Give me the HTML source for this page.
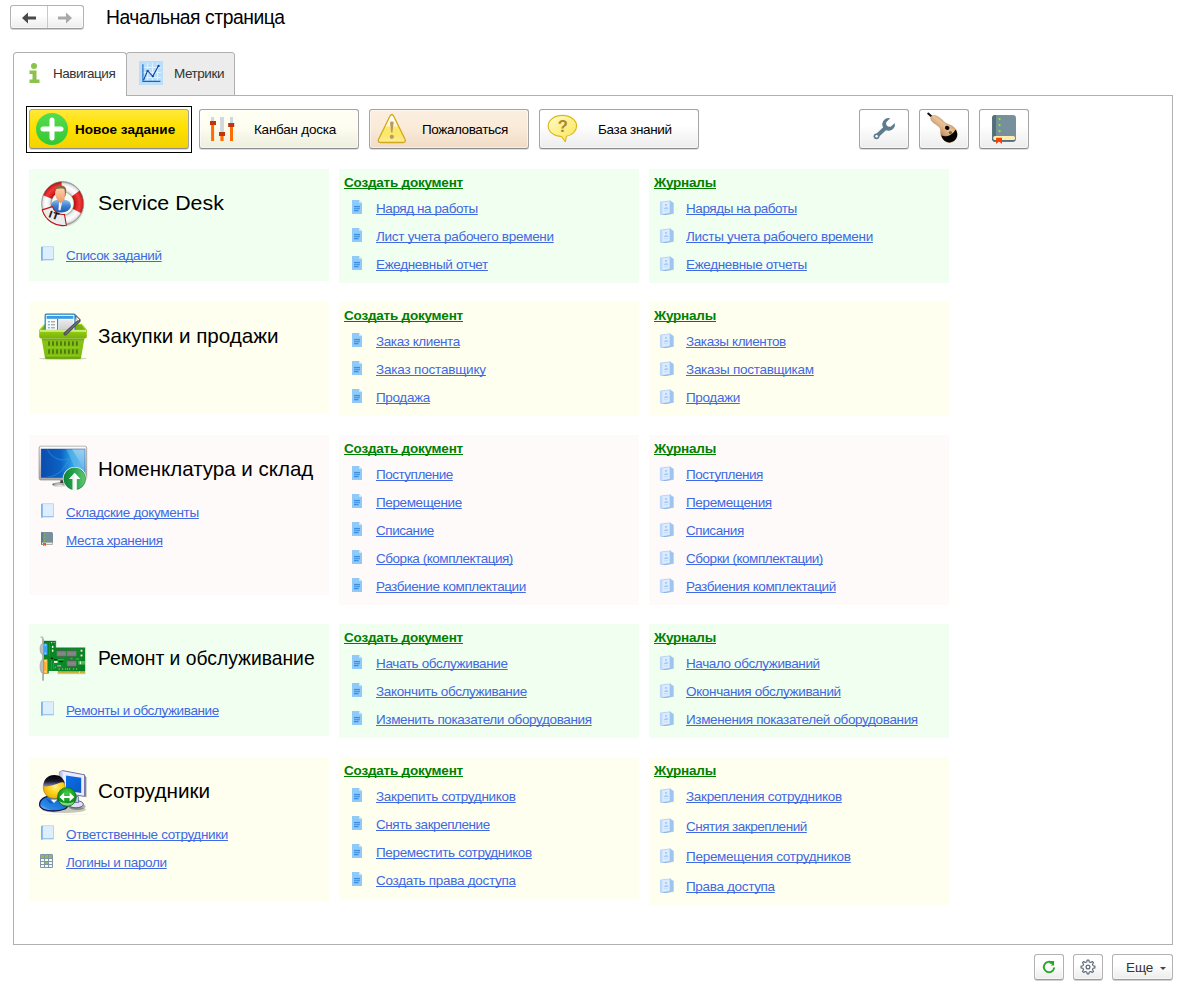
<!DOCTYPE html>
<html lang="ru"><head><meta charset="utf-8"><title>Начальная страница</title>
<style>
*{box-sizing:border-box;margin:0;padding:0}
html,body{width:1197px;height:994px;overflow:hidden;background:#fff}
body{font-family:"Liberation Sans",sans-serif;font-size:13px;color:#000;position:relative}
.abs{position:absolute}
.t{position:absolute;white-space:nowrap;line-height:16px;height:16px}
.btn{position:absolute;border:1px solid #a3a3a8;border-bottom-color:#8c8c90;border-radius:3px;background:linear-gradient(#ffffff 0%,#ffffff 40%,#ececec 100%);box-shadow:0 1px 0 rgba(0,0,0,0.13),inset 0 0 0 1px rgba(255,255,255,0.55)}
.bb{border-color:#b2b2b2;border-bottom-color:#9c9c9c;box-shadow:0 1px 0 rgba(0,0,0,0.18),inset 0 0 0 1px rgba(255,255,255,0.55)}
.pn{position:absolute}
.g{background:#f0fff0}.y{background:#fffff0}.p{background:#fffafa}
a.l{position:absolute;white-space:nowrap;line-height:16px;height:16px;color:#4169e1;text-decoration:underline;text-underline-offset:0.5px;text-decoration-thickness:1px;text-decoration-skip-ink:none;font-size:13.5px}
a.h{position:absolute;white-space:nowrap;line-height:16px;height:16px;color:#008000;font-weight:bold;text-decoration:underline;text-underline-offset:0.5px;text-decoration-thickness:1px;text-decoration-skip-ink:none;font-size:13.5px}
.ttl{position:absolute;white-space:nowrap;font-size:21px;line-height:26px;height:26px;color:#000}
svg{position:absolute;display:block;overflow:visible}
</style></head>
<body>
<div class="btn bb" style="left:10px;top:5px;width:74px;height:24px"></div>
<div class="abs" style="left:47px;top:6px;width:1px;height:22px;background:#c9c9c9"></div>
<svg style="left:22px;top:11.5px" width="14" height="12" viewBox="0 0 14 12"><path d="M0 6 L6 0.5 V4.5 H14 V7.5 H6 V11.5 Z" fill="#4a4a4a"/></svg>
<svg style="left:58px;top:11.5px" width="14" height="12" viewBox="0 0 14 12"><path d="M14 6 L8 0.5 V4.5 H0 V7.5 H8 V11.5 Z" fill="#a9a9a9"/></svg>
<div class="t" style="left:106px;top:5px;font-size:19.3px;line-height:26px;height:26px;letter-spacing:-0.442px">Начальная страница</div>
<div class="abs" style="left:13px;top:95px;width:1160px;height:850px;border:1px solid #b0b0b0;background:#fff"></div>
<div class="abs" style="left:126px;top:52px;width:109px;height:44px;border:1px solid #b0b0b0;border-radius:3px 3px 0 0;background:#ececec"></div>
<div class="abs" style="left:13px;top:52px;width:114px;height:44px;border:1px solid #b0b0b0;border-bottom:none;border-radius:4px 4px 0 0;background:#fff"></div>
<svg style="left:28.6px;top:63px" width="11" height="20" viewBox="0 0 11 20"><circle cx="5" cy="3" r="3" fill="#8bc34a"/><path d="M0.5 7.5 H7.5 V16.5 H10.5 V20 H0.5 V16.5 H3.5 V11 H0.5 Z" fill="#8bc34a"/></svg>
<div class="t" style="left:53px;top:65.7px;color:#333;font-size:13.5px;letter-spacing:-0.500px">Навигация</div>
<svg style="left:139px;top:61px" width="24" height="24" viewBox="0 0 24 24"><rect width="24" height="24" fill="#bbdefb"/><path d="M8.5 2V21M13.5 2V21M18.5 2V21M3 6.5H22M3 11.5H22M3 16.5H22" stroke="#e3f2fd" stroke-width="1"/><path d="M3.9 3.2V20.4H21.4" stroke="#1565c0" stroke-width="1.1" fill="none"/><path d="M4.6 19L8.6 9.7L13.8 15.3L19.5 4.7" stroke="#0d47a1" stroke-width="1.1" fill="none"/><circle cx="19.5" cy="4.9" r="1.2" fill="#0d47a1"/><circle cx="13.8" cy="15.3" r="1.1" fill="#0d47a1"/><circle cx="8.6" cy="9.8" r="1.1" fill="#0d47a1"/></svg>
<div class="t" style="left:174px;top:65.7px;color:#333;font-size:13.5px;letter-spacing:-0.449px">Метрики</div>
<div class="abs" style="left:26px;top:106px;width:166px;height:47px;border:1px solid #000"></div>
<div class="btn" style="left:29px;top:109px;width:160px;height:40px;background:linear-gradient(#ffe83a 0%,#ffe100 45%,#f2d300 100%);border-color:#a4a4a0 #a2a2a0 #8c8c88 #a2a2a0;box-shadow:0 1px 0 rgba(0,0,0,0.13)"></div>
<svg style="left:36px;top:113px" width="32" height="32" viewBox="0 0 32 32"><defs><linearGradient id="pg" x1="0" y1="0" x2="0" y2="1"><stop offset="0" stop-color="#55dc50"/><stop offset="1" stop-color="#33c733"/></linearGradient></defs><circle cx="16" cy="16" r="16" fill="url(#pg)"/><path d="M16 7V25M7 16H25" stroke="#fff" stroke-width="5" stroke-linecap="round"/></svg>
<div class="t" style="left:75px;top:121.6px;font-weight:bold;font-size:13.5px;letter-spacing:0.038px">Новое задание</div>
<div class="btn" style="left:199px;top:109px;width:160px;height:40px;background:linear-gradient(#fffff4 0%,#fdfdf0 45%,#eeeedf 100%)"></div>
<svg style="left:210px;top:117px" width="24" height="24" viewBox="0 0 24 24"><rect x="1.1" y="0" width="3" height="5" fill="#cfd8dc"/><rect x="1.1" y="6" width="3" height="18" fill="#ff6d00"/><rect x="0" y="4" width="6" height="4" fill="#bf360c"/><rect x="10.1" y="0" width="3.8" height="15.5" fill="#cfd8dc"/><rect x="10.4" y="17" width="3.2" height="7" fill="#ff6d00"/><rect x="9" y="15" width="6" height="4" fill="#bf360c"/><rect x="20" y="0" width="3" height="7" fill="#cfd8dc"/><rect x="20" y="8" width="3" height="16" fill="#ff6d00"/><rect x="18.2" y="6" width="6" height="4" fill="#bf360c"/></svg>
<div class="t" style="left:254px;top:121.6px;font-size:13.5px;letter-spacing:-0.243px">Канбан доска</div>
<div class="btn" style="left:369px;top:109px;width:160px;height:40px;background:linear-gradient(#fbeee0 0%,#faebd9 45%,#efdcc6 100%)"></div>
<svg style="left:376px;top:112px" width="32" height="32" viewBox="0 0 32 32"><defs><linearGradient id="wg" x1="0" y1="0" x2="0" y2="1"><stop offset="0" stop-color="#ffffff"/><stop offset="0.42" stop-color="#fdf6c8"/><stop offset="0.44" stop-color="#fbe96a"/><stop offset="0.75" stop-color="#fbe86c"/><stop offset="1" stop-color="#fbeea0"/></linearGradient></defs><path d="M14.1 3.8 Q15.8 1.2 17.5 3.8 L29 27.2 Q30.2 30.4 27 30.5 L4.6 30.5 Q1.4 30.4 2.6 27.2 Z" fill="url(#wg)" stroke="#d2a71c" stroke-width="1.3" stroke-linejoin="round"/><path d="M14 10.6 Q14 9.4 15.8 9.4 Q17.6 9.4 17.6 10.6 L16.5 20.6 L15.1 20.6 Z" fill="#b8986a"/><circle cx="15.8" cy="24.8" r="2.1" fill="#b8986a"/></svg>
<div class="t" style="left:422px;top:121.6px;font-size:13.5px;letter-spacing:-0.405px">Пожаловаться</div>
<div class="btn" style="left:539px;top:109px;width:160px;height:40px"></div>
<svg style="left:547px;top:112px" width="32" height="32" viewBox="0 0 32 32"><defs><linearGradient id="qg" x1="0" y1="0" x2="1" y2="1"><stop offset="0" stop-color="#fffbd0"/><stop offset="0.5" stop-color="#fdf08a"/><stop offset="1" stop-color="#fae65a"/></linearGradient></defs><path d="M15.4 3.4 C23.4 3.4 29.6 8 29.6 14 C29.6 19 25.2 23.2 19.4 24.3 L18.3 29.6 L14.6 24.6 C7.2 24.4 1.2 19.8 1.2 14 C1.2 8 7.4 3.4 15.4 3.4 Z" fill="url(#qg)" stroke="#dcb818" stroke-width="1.1" stroke-linejoin="round"/><text x="15.8" y="19.6" font-family="Liberation Sans, sans-serif" font-weight="bold" font-size="16.5" text-anchor="middle" fill="#a8882e">?</text></svg>
<div class="t" style="left:598px;top:121.6px;font-size:13.5px;letter-spacing:-0.324px">База знаний</div>
<div class="btn" style="left:859px;top:109px;width:50px;height:40px"></div>
<svg style="left:855px;top:104px" width="60" height="50" viewBox="0 0 60 50"><path d="M21.6 32.2 L30.4 24" stroke="#5d7d8e" stroke-width="4" stroke-linecap="round" fill="none"/><path d="M35.2 14.2 A6.4 6.4 0 1 0 39.8 18.9 L36 22.4 Q33.8 23.4 31.9 21.7 Q30.2 19.9 31.5 18 Z" fill="#5d7d8e"/><circle cx="21.5" cy="32.3" r="2.9" fill="#5d7d8e"/><circle cx="21.6" cy="32.2" r="1.25" fill="#fff"/></svg>
<div class="btn" style="left:919px;top:109px;width:50px;height:40px"></div>
<svg style="left:915px;top:104px" width="60" height="50" viewBox="0 0 60 50"><defs><linearGradient id="scg" gradientUnits="userSpaceOnUse" x1="22" y1="32" x2="36" y2="16"><stop offset="0" stop-color="#9a5a22"/><stop offset="0.3" stop-color="#d19e6c"/><stop offset="0.6" stop-color="#e6c39a"/><stop offset="1" stop-color="#c9925c"/></linearGradient></defs><path d="M13.2 9.6 L16.6 12.6" stroke="#0a0a0a" stroke-width="2" stroke-linecap="round"/><path d="M16.4 11.9 Q18.5 10.6 20.6 11.6 C24 12.8 27 15.5 29.5 18.2 C32 20.3 35.5 20.6 38 22.5 C41.5 25 42.8 29 42 32.5 C41 36.5 37.5 38.6 34.2 38.4 C30.5 38.2 27.5 35.5 26.2 32 C25 29 26.2 26 25 24 C23.6 21.6 18.5 19.5 16.6 17 C15.2 15 15.6 13 16.4 11.9 Z" fill="url(#scg)" stroke="#9a642c" stroke-opacity="0.55" stroke-width="0.5"/><path d="M26.3 31.2 C29.5 33.4 36.5 32.6 40.6 25.4 C42.6 28.5 42.8 31.6 41.4 34 C39.8 37 37 38.5 34.2 38.4 C30.5 38.2 27.6 35.6 26.3 31.2 Z" fill="#020202"/><ellipse cx="32.2" cy="23.9" rx="2.3" ry="2" transform="rotate(25 32.2 23.9)" fill="#050505"/><circle cx="35.4" cy="28.6" r="1.2" fill="#8a6a40" stroke="#3a2a14" stroke-width="0.5"/></svg>
<div class="btn" style="left:979px;top:109px;width:50px;height:40px"></div>
<svg style="left:975px;top:104px" width="60" height="50" viewBox="0 0 60 50"><rect x="17.1" y="11.1" width="23.9" height="26.6" rx="3.2" fill="#78909c"/><path d="M20.3 11.1 H21 V37.7 H20.3 Q17.1 37.7 17.1 34.5 V14.3 Q17.1 11.1 20.3 11.1 Z" fill="#546e7a"/><path d="M17.1 33 Q17.1 37.7 20.3 37.7 H37.8 Q41 37.7 41 33 V34.5 Q40.6 36.1 38.6 36.1 H20 Q18 36.1 17.6 34 Z" fill="#546e7a"/><rect x="18.3" y="31.9" width="21.7" height="4.2" rx="1.7" fill="#ffecb3"/><circle cx="24.6" cy="15.1" r="1.1" fill="#76ff03"/><circle cx="24.6" cy="21.1" r="1.1" fill="#76ff03"/><circle cx="24.6" cy="27.2" r="1.1" fill="#76ff03"/><path d="M21.1 33.8 H27 V39.9 L24.05 37.6 L21.1 39.9 Z" fill="#ff3d00"/></svg>
<div class="pn g" style="left:29px;top:169px;width:300px;height:112px"></div>
<div class="pn g" style="left:339px;top:169px;width:300px;height:114px"></div>
<div class="pn g" style="left:649px;top:169px;width:300px;height:114px"></div>
<svg style="left:33px;top:174px" width="60" height="58" viewBox="0 0 60 58"><defs><radialGradient id="lbw" gradientUnits="userSpaceOnUse" cx="29.6" cy="29.4" r="21.42"><stop offset="0.52" stop-color="#a8a8a8"/><stop offset="0.62" stop-color="#ececec"/><stop offset="0.78" stop-color="#ffffff"/><stop offset="0.92" stop-color="#e6e6e6"/><stop offset="1" stop-color="#9a9a9a"/></radialGradient><radialGradient id="lbr" gradientUnits="userSpaceOnUse" cx="29.6" cy="29.4" r="21.42"><stop offset="0.52" stop-color="#9a1010"/><stop offset="0.64" stop-color="#d82020"/><stop offset="0.8" stop-color="#f03a3a"/><stop offset="0.93" stop-color="#d82020"/><stop offset="1" stop-color="#8e1010"/></radialGradient><linearGradient id="lbs" x1="0" y1="0" x2="0" y2="1"><stop offset="0" stop-color="#ffd9b0"/><stop offset="1" stop-color="#f0a070"/></linearGradient><linearGradient id="lbb" x1="0" y1="0" x2="0" y2="1"><stop offset="0" stop-color="#8fb8ea"/><stop offset="0.5" stop-color="#3a7fd0"/><stop offset="1" stop-color="#1f5cb0"/></linearGradient></defs><ellipse cx="30.2" cy="31" rx="21.3" ry="21.8" fill="#000" opacity="0.10"/><ellipse cx="29.6" cy="29.4" rx="21" ry="21.84" fill="url(#lbw)"/><g fill="url(#lbr)"><path d="M10.13 21.22 A21.00 21.84 0 0 1 28.50 7.59 L29.01 17.77 A11.20 11.65 0 0 0 19.22 25.04 Z"/><path d="M46.59 16.56 A21.00 21.84 0 0 1 48.31 39.32 L39.58 34.69 A11.20 11.65 0 0 0 38.66 22.55 Z"/></g><ellipse cx="29.6" cy="29.4" rx="11.2" ry="11.648" fill="#f0fff0"/><ellipse cx="29.6" cy="29.4" rx="11.2" ry="11.648" fill="none" stroke="#7d7d7d" stroke-opacity="0.5" stroke-width="0.8"/><ellipse cx="29.6" cy="29.4" rx="21" ry="21.84" fill="none" stroke="#8a8a8a" stroke-opacity="0.75" stroke-width="0.9"/><path d="M17.8 33.5 C17.5 28.5 21 26 24.5 26 L31.5 26 C35.5 26 38.3 28.5 37.8 33 C36 37.5 31 38.6 27.6 38.6 C24 38.6 19.5 37.5 17.8 33.5 Z" fill="url(#lbb)"/><path d="M26.2 27 L29.3 27 L27.4 36.5 L25.4 36 Z" fill="#f4f4f4"/><path d="M24.5 26.2 L27.6 29.5 L31.8 25.6 L31 24 L25 24 Z" fill="#e79a6a"/><ellipse cx="27.4" cy="19.6" rx="5.3" ry="7.6" fill="url(#lbs)"/><path d="M22 17.5 C21.6 13.5 24 11.5 27.6 11.6 C31 11.6 33.4 13.2 33.2 17 C33.1 19.5 32.6 21.8 31.6 23.2 C32.2 20 32 17 31.2 15 C28.5 14.2 25 14.4 22.8 15.2 Z" fill="#8a6a42"/><path d="M33.30 51.22 A21.30 22.15 0 0 1 9.23 35.88 L19.46 32.62 A10.60 11.02 0 0 0 31.44 40.26 Z" fill="#ececec" stroke="#b81414" stroke-width="1.1" stroke-linejoin="round"/><text x="21.4" y="44.8" opacity="0.98" transform="rotate(20 21.4 41.6)" font-family="Liberation Sans, sans-serif" font-weight="bold" font-size="9.5" text-anchor="middle" fill="#0a0a0a" stroke="#0a0a0a" stroke-width="0.3" letter-spacing="1.2">IT</text></svg>
<div class="ttl" style="left:98px;top:190px;transform:scaleX(1.017);transform-origin:0 0">Service Desk</div>
<svg style="left:41px;top:246px" width="13" height="15.2" viewBox="0 0 13 15.2"><rect x="1" y="0.3" width="11.6" height="14.6" rx="0.8" fill="#dbe7f4"/><rect x="1" y="0.3" width="11.9" height="1.2" fill="#c0daf4"/><rect x="1.8" y="1.3" width="10.3" height="11.8" fill="#ddeeff"/><rect x="12" y="1" width="0.9" height="13" fill="#b4d2f0"/><rect x="1.8" y="13" width="11.1" height="1" fill="#9ec5ee"/><rect x="0" y="0.8" width="1.8" height="13.9" fill="#7db4ea"/></svg>
<a class="l" style="left:66px;top:248px;letter-spacing:-0.328px">Список заданий</a>
<a class="h" style="left:344px;top:175px;letter-spacing:-0.215px">Создать документ</a>
<svg style="left:352px;top:200px" width="10" height="14" viewBox="0 0 10 14"><path d="M0 0 H7.2 L10 2.8 V14 H0 Z" fill="#90caf9"/><path d="M7.2 0 L10 2.8 H7.2 Z" fill="#e3f2fd"/><rect x="2" y="5.9" width="6" height="1.4" fill="#3f8fe0"/><rect x="2" y="7.9" width="6" height="1.4" fill="#4f9ae6"/><rect x="2" y="9.9" width="4.6" height="1.4" fill="#3f8fe0"/></svg>
<a class="l" style="left:376px;top:201px;letter-spacing:-0.422px">Наряд на работы</a>
<svg style="left:352px;top:228px" width="10" height="14" viewBox="0 0 10 14"><path d="M0 0 H7.2 L10 2.8 V14 H0 Z" fill="#90caf9"/><path d="M7.2 0 L10 2.8 H7.2 Z" fill="#e3f2fd"/><rect x="2" y="5.9" width="6" height="1.4" fill="#3f8fe0"/><rect x="2" y="7.9" width="6" height="1.4" fill="#4f9ae6"/><rect x="2" y="9.9" width="4.6" height="1.4" fill="#3f8fe0"/></svg>
<a class="l" style="left:376px;top:229px;letter-spacing:-0.289px">Лист учета рабочего времени</a>
<svg style="left:352px;top:256px" width="10" height="14" viewBox="0 0 10 14"><path d="M0 0 H7.2 L10 2.8 V14 H0 Z" fill="#90caf9"/><path d="M7.2 0 L10 2.8 H7.2 Z" fill="#e3f2fd"/><rect x="2" y="5.9" width="6" height="1.4" fill="#3f8fe0"/><rect x="2" y="7.9" width="6" height="1.4" fill="#4f9ae6"/><rect x="2" y="9.9" width="4.6" height="1.4" fill="#3f8fe0"/></svg>
<a class="l" style="left:376px;top:257px;letter-spacing:-0.343px">Ежедневный отчет</a>
<a class="h" style="left:654px;top:175px;letter-spacing:-0.221px">Журналы</a>
<svg style="left:660px;top:200px" width="14" height="15" viewBox="0 0 14 15"><path d="M0.4 2 L10 0.9 V13.3 L1.2 14.6 Q0.4 14.6 0.4 13.8 Z" fill="#dbeafe" stroke="#a5c9f0" stroke-width="0.7"/><path d="M10 -0.3 L10.6 1 L13.7 3 V13.8 L10 13.3 Z" fill="#9ec5ee"/><path d="M1.2 14.7 L10 13.3 L13.7 13.8 L5 15.1 Z" fill="#7fb0e4"/><rect x="0.4" y="2.2" width="1.9" height="11.8" fill="#bdd9fa"/><circle cx="6" cy="4.9" r="0.9" fill="#8fc1f5"/><path d="M3.8 8.9 Q6 5.8 8.6 8.4 Z" fill="#8fc1f5"/><rect x="4" y="10.4" width="4" height="0.7" fill="#bcd7f5"/></svg>
<a class="l" style="left:686px;top:201px;letter-spacing:-0.433px">Наряды на работы</a>
<svg style="left:660px;top:228px" width="14" height="15" viewBox="0 0 14 15"><path d="M0.4 2 L10 0.9 V13.3 L1.2 14.6 Q0.4 14.6 0.4 13.8 Z" fill="#dbeafe" stroke="#a5c9f0" stroke-width="0.7"/><path d="M10 -0.3 L10.6 1 L13.7 3 V13.8 L10 13.3 Z" fill="#9ec5ee"/><path d="M1.2 14.7 L10 13.3 L13.7 13.8 L5 15.1 Z" fill="#7fb0e4"/><rect x="0.4" y="2.2" width="1.9" height="11.8" fill="#bdd9fa"/><circle cx="6" cy="4.9" r="0.9" fill="#8fc1f5"/><path d="M3.8 8.9 Q6 5.8 8.6 8.4 Z" fill="#8fc1f5"/><rect x="4" y="10.4" width="4" height="0.7" fill="#bcd7f5"/></svg>
<a class="l" style="left:686px;top:229px;letter-spacing:-0.300px">Листы учета рабочего времени</a>
<svg style="left:660px;top:256px" width="14" height="15" viewBox="0 0 14 15"><path d="M0.4 2 L10 0.9 V13.3 L1.2 14.6 Q0.4 14.6 0.4 13.8 Z" fill="#dbeafe" stroke="#a5c9f0" stroke-width="0.7"/><path d="M10 -0.3 L10.6 1 L13.7 3 V13.8 L10 13.3 Z" fill="#9ec5ee"/><path d="M1.2 14.7 L10 13.3 L13.7 13.8 L5 15.1 Z" fill="#7fb0e4"/><rect x="0.4" y="2.2" width="1.9" height="11.8" fill="#bdd9fa"/><circle cx="6" cy="4.9" r="0.9" fill="#8fc1f5"/><path d="M3.8 8.9 Q6 5.8 8.6 8.4 Z" fill="#8fc1f5"/><rect x="4" y="10.4" width="4" height="0.7" fill="#bcd7f5"/></svg>
<a class="l" style="left:686px;top:257px;letter-spacing:-0.362px">Ежедневные отчеты</a>
<div class="pn y" style="left:29px;top:302px;width:300px;height:112px"></div>
<div class="pn y" style="left:339px;top:302px;width:300px;height:114px"></div>
<div class="pn y" style="left:649px;top:302px;width:300px;height:114px"></div>
<svg style="left:33px;top:307px" width="60" height="58" viewBox="0 0 60 58"><defs><linearGradient id="bk1" x1="0" y1="0" x2="0" y2="1"><stop offset="0" stop-color="#a4dc10"/><stop offset="0.25" stop-color="#8fcb0c"/><stop offset="1" stop-color="#78b20a"/></linearGradient><linearGradient id="bk2" x1="0" y1="0" x2="0" y2="1"><stop offset="0" stop-color="#6ea010"/><stop offset="0.15" stop-color="#86c414"/><stop offset="1" stop-color="#7cba12"/></linearGradient><linearGradient id="bk3" x1="0" y1="0" x2="0" y2="1"><stop offset="0" stop-color="#e9e9e9"/><stop offset="1" stop-color="#cfcfcf"/></linearGradient></defs><ellipse cx="30" cy="51.6" rx="24" ry="1.3" fill="#000" opacity="0.18"/><path d="M6.5 23.5 L12 17.4 L48.6 17.4 L53.6 23.5 Z" fill="#78b010"/><path d="M6.5 23.5 L12 17.4 L48.6 17.4 L53.6 23.5" fill="none" stroke="#9ad614" stroke-width="1.2"/><rect x="12.2" y="7.2" width="29.8" height="16.5" rx="1" fill="#fafafa" stroke="#1a80cc" stroke-width="1.2"/><rect x="13.6" y="8.9" width="26.8" height="2.9" fill="#3a9be0"/><rect x="24.1" y="12" width="1.1" height="11.5" fill="#1a80cc"/><rect x="26.1" y="13.1" width="13.8" height="10.2" fill="url(#bk3)"/><rect x="14.9" y="14.3" width="2" height="1" fill="#3a9be0"/><rect x="18" y="14.3" width="4" height="1" fill="#8a8a8a"/><rect x="14.9" y="17.3" width="2" height="1" fill="#3a9be0"/><rect x="18" y="17.3" width="4" height="1" fill="#8a8a8a"/><rect x="14.9" y="20.3" width="2" height="1" fill="#3a9be0"/><rect x="18" y="20.3" width="4" height="1" fill="#8a8a8a"/><path d="M6.2 23.4 Q6.2 22.8 7 22.8 L53 22.8 Q53.8 22.8 53.8 23.4 L53.8 29.4 Q53.8 31.4 51.8 31.4 L8.2 31.4 Q6.2 31.4 6.2 29.4 Z" fill="url(#bk1)"/><rect x="6.8" y="23.3" width="46.4" height="1.3" fill="#e9f8c0" opacity="0.95"/><path d="M42.3 7.2 L47.6 12.6 L47.6 14.6 L33.4 28.2 Q32 29.2 30.8 28 Q29.8 26.6 31 25.6 L44.4 13.2 L42.3 11.2 Z" fill="#505357"/><path d="M43.3 9.4 L46.4 12.6 L45 13.8 L43.3 12.1 Z" fill="#f4f4f4"/><path d="M45.8 14.2 L32.4 26.8" stroke="#9a9ea3" stroke-width="0.6"/><path d="M8.6 31.4 L51.4 31.4 L48 51 Q47.8 51.8 47 51.8 L13 51.8 Q12.2 51.8 12 51 Z" fill="url(#bk2)"/><path d="M12.3 50.3 L47.7 50.3 L47.5 51.2 Q47.3 51.8 46.6 51.8 L13.4 51.8 Q12.7 51.8 12.5 51.2 Z" fill="#68a00c"/><rect x="15.10" y="34.2" width="1.9" height="4.6" rx="0.6" fill="#4d7a0e"/><rect x="19.07" y="34.2" width="1.9" height="4.6" rx="0.6" fill="#4d7a0e"/><rect x="23.04" y="34.2" width="1.9" height="4.6" rx="0.6" fill="#4d7a0e"/><rect x="27.01" y="34.2" width="1.9" height="4.6" rx="0.6" fill="#4d7a0e"/><rect x="30.98" y="34.2" width="1.9" height="4.6" rx="0.6" fill="#4d7a0e"/><rect x="34.95" y="34.2" width="1.9" height="4.6" rx="0.6" fill="#4d7a0e"/><rect x="38.92" y="34.2" width="1.9" height="4.6" rx="0.6" fill="#4d7a0e"/><rect x="42.89" y="34.2" width="1.9" height="4.6" rx="0.6" fill="#4d7a0e"/><rect x="15.10" y="42.2" width="1.9" height="4.6" rx="0.6" fill="#4d7a0e"/><rect x="19.07" y="42.2" width="1.9" height="4.6" rx="0.6" fill="#4d7a0e"/><rect x="23.04" y="42.2" width="1.9" height="4.6" rx="0.6" fill="#4d7a0e"/><rect x="27.01" y="42.2" width="1.9" height="4.6" rx="0.6" fill="#4d7a0e"/><rect x="30.98" y="42.2" width="1.9" height="4.6" rx="0.6" fill="#4d7a0e"/><rect x="34.95" y="42.2" width="1.9" height="4.6" rx="0.6" fill="#4d7a0e"/><rect x="38.92" y="42.2" width="1.9" height="4.6" rx="0.6" fill="#4d7a0e"/><rect x="42.89" y="42.2" width="1.9" height="4.6" rx="0.6" fill="#4d7a0e"/><rect x="13" y="40" width="34" height="0.8" fill="#9ad61a" opacity="0.6"/><rect x="13.6" y="48" width="32.8" height="0.8" fill="#9ad61a" opacity="0.6"/></svg>
<div class="ttl" style="left:98px;top:323px;transform:scaleX(0.982);transform-origin:0 0">Закупки и продажи</div>
<a class="h" style="left:344px;top:308px;letter-spacing:-0.215px">Создать документ</a>
<svg style="left:352px;top:333px" width="10" height="14" viewBox="0 0 10 14"><path d="M0 0 H7.2 L10 2.8 V14 H0 Z" fill="#90caf9"/><path d="M7.2 0 L10 2.8 H7.2 Z" fill="#e3f2fd"/><rect x="2" y="5.9" width="6" height="1.4" fill="#3f8fe0"/><rect x="2" y="7.9" width="6" height="1.4" fill="#4f9ae6"/><rect x="2" y="9.9" width="4.6" height="1.4" fill="#3f8fe0"/></svg>
<a class="l" style="left:376px;top:334px;letter-spacing:-0.412px">Заказ клиента</a>
<svg style="left:352px;top:361px" width="10" height="14" viewBox="0 0 10 14"><path d="M0 0 H7.2 L10 2.8 V14 H0 Z" fill="#90caf9"/><path d="M7.2 0 L10 2.8 H7.2 Z" fill="#e3f2fd"/><rect x="2" y="5.9" width="6" height="1.4" fill="#3f8fe0"/><rect x="2" y="7.9" width="6" height="1.4" fill="#4f9ae6"/><rect x="2" y="9.9" width="4.6" height="1.4" fill="#3f8fe0"/></svg>
<a class="l" style="left:376px;top:362px;letter-spacing:-0.188px">Заказ поставщику</a>
<svg style="left:352px;top:389px" width="10" height="14" viewBox="0 0 10 14"><path d="M0 0 H7.2 L10 2.8 V14 H0 Z" fill="#90caf9"/><path d="M7.2 0 L10 2.8 H7.2 Z" fill="#e3f2fd"/><rect x="2" y="5.9" width="6" height="1.4" fill="#3f8fe0"/><rect x="2" y="7.9" width="6" height="1.4" fill="#4f9ae6"/><rect x="2" y="9.9" width="4.6" height="1.4" fill="#3f8fe0"/></svg>
<a class="l" style="left:376px;top:390px;letter-spacing:-0.351px">Продажа</a>
<a class="h" style="left:654px;top:308px;letter-spacing:-0.221px">Журналы</a>
<svg style="left:660px;top:333px" width="14" height="15" viewBox="0 0 14 15"><path d="M0.4 2 L10 0.9 V13.3 L1.2 14.6 Q0.4 14.6 0.4 13.8 Z" fill="#dbeafe" stroke="#a5c9f0" stroke-width="0.7"/><path d="M10 -0.3 L10.6 1 L13.7 3 V13.8 L10 13.3 Z" fill="#9ec5ee"/><path d="M1.2 14.7 L10 13.3 L13.7 13.8 L5 15.1 Z" fill="#7fb0e4"/><rect x="0.4" y="2.2" width="1.9" height="11.8" fill="#bdd9fa"/><circle cx="6" cy="4.9" r="0.9" fill="#8fc1f5"/><path d="M3.8 8.9 Q6 5.8 8.6 8.4 Z" fill="#8fc1f5"/><rect x="4" y="10.4" width="4" height="0.7" fill="#bcd7f5"/></svg>
<a class="l" style="left:686px;top:334px;letter-spacing:-0.409px">Заказы клиентов</a>
<svg style="left:660px;top:361px" width="14" height="15" viewBox="0 0 14 15"><path d="M0.4 2 L10 0.9 V13.3 L1.2 14.6 Q0.4 14.6 0.4 13.8 Z" fill="#dbeafe" stroke="#a5c9f0" stroke-width="0.7"/><path d="M10 -0.3 L10.6 1 L13.7 3 V13.8 L10 13.3 Z" fill="#9ec5ee"/><path d="M1.2 14.7 L10 13.3 L13.7 13.8 L5 15.1 Z" fill="#7fb0e4"/><rect x="0.4" y="2.2" width="1.9" height="11.8" fill="#bdd9fa"/><circle cx="6" cy="4.9" r="0.9" fill="#8fc1f5"/><path d="M3.8 8.9 Q6 5.8 8.6 8.4 Z" fill="#8fc1f5"/><rect x="4" y="10.4" width="4" height="0.7" fill="#bcd7f5"/></svg>
<a class="l" style="left:686px;top:362px;letter-spacing:-0.278px">Заказы поставщикам</a>
<svg style="left:660px;top:389px" width="14" height="15" viewBox="0 0 14 15"><path d="M0.4 2 L10 0.9 V13.3 L1.2 14.6 Q0.4 14.6 0.4 13.8 Z" fill="#dbeafe" stroke="#a5c9f0" stroke-width="0.7"/><path d="M10 -0.3 L10.6 1 L13.7 3 V13.8 L10 13.3 Z" fill="#9ec5ee"/><path d="M1.2 14.7 L10 13.3 L13.7 13.8 L5 15.1 Z" fill="#7fb0e4"/><rect x="0.4" y="2.2" width="1.9" height="11.8" fill="#bdd9fa"/><circle cx="6" cy="4.9" r="0.9" fill="#8fc1f5"/><path d="M3.8 8.9 Q6 5.8 8.6 8.4 Z" fill="#8fc1f5"/><rect x="4" y="10.4" width="4" height="0.7" fill="#bcd7f5"/></svg>
<a class="l" style="left:686px;top:390px;letter-spacing:-0.356px">Продажи</a>
<div class="pn p" style="left:29px;top:435px;width:300px;height:160px"></div>
<div class="pn p" style="left:339px;top:435px;width:300px;height:170px"></div>
<div class="pn p" style="left:649px;top:435px;width:300px;height:170px"></div>
<svg style="left:33px;top:440px" width="60" height="58" viewBox="0 0 60 58"><defs><linearGradient id="mn1" x1="0" y1="0" x2="1" y2="0"><stop offset="0" stop-color="#0a4cae"/><stop offset="0.45" stop-color="#0b63c4"/><stop offset="0.7" stop-color="#2a9fe2"/><stop offset="1" stop-color="#5aaee6"/></linearGradient><linearGradient id="mn2" x1="0" y1="0" x2="0" y2="1"><stop offset="0" stop-color="#f2f2f2"/><stop offset="0.5" stop-color="#d2d2d2"/><stop offset="1" stop-color="#a8a8a8"/></linearGradient><linearGradient id="mn3" x1="0" y1="0" x2="1" y2="0"><stop offset="0" stop-color="#0b8438"/><stop offset="0.5" stop-color="#2aa44e"/><stop offset="1" stop-color="#63c872"/></linearGradient><linearGradient id="mn4" x1="0" y1="0" x2="0" y2="1"><stop offset="0" stop-color="#ffffff" stop-opacity="0.35"/><stop offset="1" stop-color="#ffffff" stop-opacity="0"/></linearGradient></defs><path d="M27.5 40 L31.5 40 L31 44 L27 44 Z" fill="#3a3a3a"/><ellipse cx="26.6" cy="44.6" rx="7.4" ry="2.1" fill="#5a5a5a"/><ellipse cx="26" cy="44.1" rx="5.6" ry="1.1" fill="#bdbdbd"/><ellipse cx="27" cy="46" rx="7" ry="0.9" fill="#e4e4e4"/><rect x="6.1" y="6.2" width="47.6" height="33.8" rx="1.8" fill="url(#mn2)" stroke="#8a8a8a" stroke-width="0.7"/><rect x="7" y="6.8" width="45.8" height="2" rx="1" fill="#fbfbfb"/><rect x="8.2" y="9" width="43.8" height="28.4" fill="url(#mn1)"/><path d="M33 9 L52 9 L52 37.4 L44 37.4 C42 28 38 18 33 9 Z" fill="#7cc6f0" opacity="0.45"/><path d="M39 9 L52 9 L52 30 C48 24 43 16 39 9 Z" fill="url(#mn4)"/><path d="M14 9 C20 20 30 22 36 18 C32 30 24 36 14 37.4" fill="none" stroke="#3a9ae0" stroke-width="1.2" opacity="0.45"/><rect x="8.2" y="9" width="43.8" height="28.4" fill="none" stroke="#0a3c8a" stroke-width="0.6" opacity="0.7"/><circle cx="41.7" cy="38.8" r="11.9" fill="#fff"/><circle cx="41.7" cy="38.8" r="10.9" fill="url(#mn3)" stroke="#0a7a32" stroke-width="0.6"/><path d="M41.7 32.8 L47.4 38.9 L43.8 38.9 L43.8 50 L39.6 50 L39.6 38.9 L36 38.9 Z" fill="#fff"/><path d="M41.7 32.8 L41.7 50 L39.6 50 L39.6 38.9 L36 38.9 Z" fill="#e6e6e6" opacity="0.6"/></svg>
<div class="ttl" style="left:98px;top:456px;transform:scaleX(0.9765);transform-origin:0 0">Номенклатура и склад</div>
<svg style="left:41px;top:503px" width="13" height="15.2" viewBox="0 0 13 15.2"><rect x="1" y="0.3" width="11.6" height="14.6" rx="0.8" fill="#dbe7f4"/><rect x="1" y="0.3" width="11.9" height="1.2" fill="#c0daf4"/><rect x="1.8" y="1.3" width="10.3" height="11.8" fill="#ddeeff"/><rect x="12" y="1" width="0.9" height="13" fill="#b4d2f0"/><rect x="1.8" y="13" width="11.1" height="1" fill="#9ec5ee"/><rect x="0" y="0.8" width="1.8" height="13.9" fill="#7db4ea"/></svg>
<a class="l" style="left:66px;top:505px;letter-spacing:-0.311px">Складские документы</a>
<svg style="left:41px;top:532px" width="12" height="14" viewBox="0 0 12 14"><rect x="0" y="0" width="12" height="13" rx="1.5" fill="#78909c"/><rect x="0" y="0" width="2" height="13" rx="1" fill="#607d8b"/><rect x="1" y="10.6" width="10.5" height="1.8" fill="#ffecb3"/><circle cx="3.6" cy="2.3" r="0.7" fill="#76c043"/><circle cx="3.6" cy="5.3" r="0.7" fill="#76c043"/><circle cx="3.6" cy="8.3" r="0.7" fill="#76c043"/><path d="M2 11 H5 V14 L3.5 13.2 L2 14 Z" fill="#f4511e"/></svg>
<a class="l" style="left:66px;top:533px;letter-spacing:-0.377px">Места хранения</a>
<a class="h" style="left:344px;top:441px;letter-spacing:-0.215px">Создать документ</a>
<svg style="left:352px;top:466px" width="10" height="14" viewBox="0 0 10 14"><path d="M0 0 H7.2 L10 2.8 V14 H0 Z" fill="#90caf9"/><path d="M7.2 0 L10 2.8 H7.2 Z" fill="#e3f2fd"/><rect x="2" y="5.9" width="6" height="1.4" fill="#3f8fe0"/><rect x="2" y="7.9" width="6" height="1.4" fill="#4f9ae6"/><rect x="2" y="9.9" width="4.6" height="1.4" fill="#3f8fe0"/></svg>
<a class="l" style="left:376px;top:467px;letter-spacing:-0.495px">Поступление</a>
<svg style="left:352px;top:494px" width="10" height="14" viewBox="0 0 10 14"><path d="M0 0 H7.2 L10 2.8 V14 H0 Z" fill="#90caf9"/><path d="M7.2 0 L10 2.8 H7.2 Z" fill="#e3f2fd"/><rect x="2" y="5.9" width="6" height="1.4" fill="#3f8fe0"/><rect x="2" y="7.9" width="6" height="1.4" fill="#4f9ae6"/><rect x="2" y="9.9" width="4.6" height="1.4" fill="#3f8fe0"/></svg>
<a class="l" style="left:376px;top:495px;letter-spacing:-0.382px">Перемещение</a>
<svg style="left:352px;top:522px" width="10" height="14" viewBox="0 0 10 14"><path d="M0 0 H7.2 L10 2.8 V14 H0 Z" fill="#90caf9"/><path d="M7.2 0 L10 2.8 H7.2 Z" fill="#e3f2fd"/><rect x="2" y="5.9" width="6" height="1.4" fill="#3f8fe0"/><rect x="2" y="7.9" width="6" height="1.4" fill="#4f9ae6"/><rect x="2" y="9.9" width="4.6" height="1.4" fill="#3f8fe0"/></svg>
<a class="l" style="left:376px;top:523px;letter-spacing:-0.447px">Списание</a>
<svg style="left:352px;top:550px" width="10" height="14" viewBox="0 0 10 14"><path d="M0 0 H7.2 L10 2.8 V14 H0 Z" fill="#90caf9"/><path d="M7.2 0 L10 2.8 H7.2 Z" fill="#e3f2fd"/><rect x="2" y="5.9" width="6" height="1.4" fill="#3f8fe0"/><rect x="2" y="7.9" width="6" height="1.4" fill="#4f9ae6"/><rect x="2" y="9.9" width="4.6" height="1.4" fill="#3f8fe0"/></svg>
<a class="l" style="left:376px;top:551px;letter-spacing:-0.466px">Сборка (комплектация)</a>
<svg style="left:352px;top:578px" width="10" height="14" viewBox="0 0 10 14"><path d="M0 0 H7.2 L10 2.8 V14 H0 Z" fill="#90caf9"/><path d="M7.2 0 L10 2.8 H7.2 Z" fill="#e3f2fd"/><rect x="2" y="5.9" width="6" height="1.4" fill="#3f8fe0"/><rect x="2" y="7.9" width="6" height="1.4" fill="#4f9ae6"/><rect x="2" y="9.9" width="4.6" height="1.4" fill="#3f8fe0"/></svg>
<a class="l" style="left:376px;top:579px;letter-spacing:-0.416px">Разбиение комплектации</a>
<a class="h" style="left:654px;top:441px;letter-spacing:-0.221px">Журналы</a>
<svg style="left:660px;top:466px" width="14" height="15" viewBox="0 0 14 15"><path d="M0.4 2 L10 0.9 V13.3 L1.2 14.6 Q0.4 14.6 0.4 13.8 Z" fill="#dbeafe" stroke="#a5c9f0" stroke-width="0.7"/><path d="M10 -0.3 L10.6 1 L13.7 3 V13.8 L10 13.3 Z" fill="#9ec5ee"/><path d="M1.2 14.7 L10 13.3 L13.7 13.8 L5 15.1 Z" fill="#7fb0e4"/><rect x="0.4" y="2.2" width="1.9" height="11.8" fill="#bdd9fa"/><circle cx="6" cy="4.9" r="0.9" fill="#8fc1f5"/><path d="M3.8 8.9 Q6 5.8 8.6 8.4 Z" fill="#8fc1f5"/><rect x="4" y="10.4" width="4" height="0.7" fill="#bcd7f5"/></svg>
<a class="l" style="left:686px;top:467px;letter-spacing:-0.478px">Поступления</a>
<svg style="left:660px;top:494px" width="14" height="15" viewBox="0 0 14 15"><path d="M0.4 2 L10 0.9 V13.3 L1.2 14.6 Q0.4 14.6 0.4 13.8 Z" fill="#dbeafe" stroke="#a5c9f0" stroke-width="0.7"/><path d="M10 -0.3 L10.6 1 L13.7 3 V13.8 L10 13.3 Z" fill="#9ec5ee"/><path d="M1.2 14.7 L10 13.3 L13.7 13.8 L5 15.1 Z" fill="#7fb0e4"/><rect x="0.4" y="2.2" width="1.9" height="11.8" fill="#bdd9fa"/><circle cx="6" cy="4.9" r="0.9" fill="#8fc1f5"/><path d="M3.8 8.9 Q6 5.8 8.6 8.4 Z" fill="#8fc1f5"/><rect x="4" y="10.4" width="4" height="0.7" fill="#bcd7f5"/></svg>
<a class="l" style="left:686px;top:495px;letter-spacing:-0.363px">Перемещения</a>
<svg style="left:660px;top:522px" width="14" height="15" viewBox="0 0 14 15"><path d="M0.4 2 L10 0.9 V13.3 L1.2 14.6 Q0.4 14.6 0.4 13.8 Z" fill="#dbeafe" stroke="#a5c9f0" stroke-width="0.7"/><path d="M10 -0.3 L10.6 1 L13.7 3 V13.8 L10 13.3 Z" fill="#9ec5ee"/><path d="M1.2 14.7 L10 13.3 L13.7 13.8 L5 15.1 Z" fill="#7fb0e4"/><rect x="0.4" y="2.2" width="1.9" height="11.8" fill="#bdd9fa"/><circle cx="6" cy="4.9" r="0.9" fill="#8fc1f5"/><path d="M3.8 8.9 Q6 5.8 8.6 8.4 Z" fill="#8fc1f5"/><rect x="4" y="10.4" width="4" height="0.7" fill="#bcd7f5"/></svg>
<a class="l" style="left:686px;top:523px;letter-spacing:-0.421px">Списания</a>
<svg style="left:660px;top:550px" width="14" height="15" viewBox="0 0 14 15"><path d="M0.4 2 L10 0.9 V13.3 L1.2 14.6 Q0.4 14.6 0.4 13.8 Z" fill="#dbeafe" stroke="#a5c9f0" stroke-width="0.7"/><path d="M10 -0.3 L10.6 1 L13.7 3 V13.8 L10 13.3 Z" fill="#9ec5ee"/><path d="M1.2 14.7 L10 13.3 L13.7 13.8 L5 15.1 Z" fill="#7fb0e4"/><rect x="0.4" y="2.2" width="1.9" height="11.8" fill="#bdd9fa"/><circle cx="6" cy="4.9" r="0.9" fill="#8fc1f5"/><path d="M3.8 8.9 Q6 5.8 8.6 8.4 Z" fill="#8fc1f5"/><rect x="4" y="10.4" width="4" height="0.7" fill="#bcd7f5"/></svg>
<a class="l" style="left:686px;top:551px;letter-spacing:-0.465px">Сборки (комплектации)</a>
<svg style="left:660px;top:578px" width="14" height="15" viewBox="0 0 14 15"><path d="M0.4 2 L10 0.9 V13.3 L1.2 14.6 Q0.4 14.6 0.4 13.8 Z" fill="#dbeafe" stroke="#a5c9f0" stroke-width="0.7"/><path d="M10 -0.3 L10.6 1 L13.7 3 V13.8 L10 13.3 Z" fill="#9ec5ee"/><path d="M1.2 14.7 L10 13.3 L13.7 13.8 L5 15.1 Z" fill="#7fb0e4"/><rect x="0.4" y="2.2" width="1.9" height="11.8" fill="#bdd9fa"/><circle cx="6" cy="4.9" r="0.9" fill="#8fc1f5"/><path d="M3.8 8.9 Q6 5.8 8.6 8.4 Z" fill="#8fc1f5"/><rect x="4" y="10.4" width="4" height="0.7" fill="#bcd7f5"/></svg>
<a class="l" style="left:686px;top:579px;letter-spacing:-0.407px">Разбиения комплектаций</a>
<div class="pn g" style="left:29px;top:624px;width:300px;height:112px"></div>
<div class="pn g" style="left:339px;top:624px;width:300px;height:114px"></div>
<div class="pn g" style="left:649px;top:624px;width:300px;height:114px"></div>
<svg style="left:33px;top:629px" width="60" height="58" viewBox="0 0 60 58"><defs><linearGradient id="cd1" x1="0" y1="0" x2="1" y2="0"><stop offset="0" stop-color="#ff9a3c"/><stop offset="1" stop-color="#ffd23c"/></linearGradient><linearGradient id="cd2" x1="0" y1="0" x2="0" y2="1"><stop offset="0" stop-color="#555"/><stop offset="0.5" stop-color="#7a7a7a"/><stop offset="1" stop-color="#5c5c5c"/></linearGradient><linearGradient id="cd3" x1="0" y1="0" x2="1" y2="1"><stop offset="0" stop-color="#087a1e"/><stop offset="0.5" stop-color="#0c8c28"/><stop offset="1" stop-color="#087c20"/></linearGradient></defs><rect x="24.6" y="43.6" width="28" height="1.6" fill="#000" opacity="0.18"/><path d="M7.2 7.4 L10 7.4 L10.9 10 L10.9 51.5 L9.3 51.5 L9.3 10 L7.2 8 Z" fill="#bdbdbd"/><rect x="9.3" y="10" width="1.6" height="41.5" fill="#adadad"/><path d="M10.6 14.4 L8.4 15.2 Q7 17 7 20 Q7 23.4 8.4 24.8 L10.6 25.6 Z" fill="#bcbcbc" stroke="#8a8a8a" stroke-width="0.5"/><path d="M10.6 30.4 L8.4 31.4 Q7 34 7 37.4 Q7 41.4 8.4 43.4 L10.6 44.4 Z" fill="#bcbcbc" stroke="#8a8a8a" stroke-width="0.5"/><path d="M10.9 12 L22.8 12 L22.8 18.7 L52.2 18.7 L52.2 42 L15.8 42 L15.8 44.4 L10.9 44.4 Z" fill="url(#cd3)"/><path d="M10.9 12 L22.8 12 L22.8 18.7 L52.2 18.7" fill="none" stroke="#1a5a20" stroke-width="0.5" opacity="0.7"/><rect x="10.9" y="14.6" width="3.5" height="11.2" fill="#3fa6f2"/><rect x="11.6" y="15.2" width="1.6" height="1.6" fill="#8fd0ff"/><rect x="11.6" y="23.6" width="1.6" height="1.6" fill="#8fd0ff"/><rect x="10.9" y="30.4" width="3.5" height="13.6" fill="url(#cd1)"/><rect x="11.6" y="31" width="1.6" height="1.6" fill="#ffe08a"/><rect x="11.6" y="41.8" width="1.6" height="1.6" fill="#ffe08a"/><rect x="24.8" y="42" width="21.4" height="2.3" fill="#c9b23c"/><rect x="47" y="42" width="5" height="2.3" fill="#c9b23c"/><rect x="24.8" y="42" width="27.2" height="0.6" fill="#8a8a2a" opacity="0.6"/><rect x="24.2" y="21.3" width="8.5" height="6.5" rx="0.8" fill="url(#cd2)"/><rect x="23.6" y="22" width="9.7" height="5.1" fill="#9a9a9a" opacity="0.45"/><rect x="34.4" y="21.3" width="8.5" height="6.5" rx="0.8" fill="url(#cd2)"/><rect x="33.8" y="22" width="9.7" height="5.1" fill="#9a9a9a" opacity="0.45"/><rect x="34.4" y="31.2" width="8.5" height="6.5" rx="0.8" fill="url(#cd2)"/><rect x="33.8" y="31.9" width="9.7" height="5.1" fill="#9a9a9a" opacity="0.45"/><circle cx="48.5" cy="21.7" r="1.3" fill="#e8e8e8" stroke="#2a6a2a" stroke-width="0.5"/><circle cx="48.5" cy="26.5" r="1.3" fill="#e8e8e8" stroke="#2a6a2a" stroke-width="0.5"/><rect x="18.9" y="16.8" width="1.5" height="2.2" fill="#f4f4f4"/><rect x="18.9" y="20.6" width="1.5" height="2.2" fill="#f4f4f4"/><rect x="18" y="13" width="1.2" height="1.2" fill="#bfe0bf"/><rect x="20.4" y="13" width="1.6" height="1" fill="#6ab06a"/><rect x="16.4" y="13.4" width="0.5" height="14" fill="#4aa85a" opacity="0.8"/><rect x="17.8" y="28.8" width="2.4" height="1.2" fill="#111"/><rect x="21.2" y="30" width="3" height="1" fill="#222"/><rect x="26.2" y="32" width="3.6" height="1.1" fill="#111"/><rect x="21" y="32" width="3.6" height="1.9" fill="#f6f0f0"/><rect x="24.2" y="36" width="4" height="1.7" fill="#9a9aa8"/><rect x="25" y="30" width="5.6" height="0.8" fill="#5ab86a" opacity="0.8"/><rect x="18.4" y="31.6" width="0.6" height="9" fill="#4aa85a" opacity="0.8"/><rect x="20" y="34" width="0.6" height="6" fill="#4aa85a" opacity="0.8"/><rect x="45.2" y="32" width="6.8" height="3.6" fill="#6cc46c" opacity="0.75"/><rect x="46.8" y="32.4" width="1.2" height="2.8" fill="#d8f0d8"/><rect x="42.6" y="29.4" width="3.6" height="1.3" fill="#4aa85a"/><rect x="37.6" y="29.2" width="2" height="1" fill="#6ab86a"/><rect x="25.8" y="39.2" width="0.7" height="1.6" fill="#a8d8a8"/><rect x="29.4" y="39.2" width="0.7" height="1.6" fill="#a8d8a8"/><rect x="32.4" y="39.2" width="0.7" height="1.6" fill="#a8d8a8"/><rect x="34.4" y="39.2" width="0.7" height="1.6" fill="#a8d8a8"/><rect x="36.4" y="39.2" width="0.7" height="1.6" fill="#a8d8a8"/><rect x="40.4" y="39.2" width="0.7" height="1.6" fill="#a8d8a8"/><rect x="43.4" y="39.2" width="0.7" height="1.6" fill="#a8d8a8"/><circle cx="22.4" cy="38.4" r="0.8" fill="#7a9a7a"/></svg>
<div class="ttl" style="left:98px;top:645px;transform:scaleX(0.9185);transform-origin:0 0">Ремонт и обслуживание</div>
<svg style="left:41px;top:701px" width="13" height="15.2" viewBox="0 0 13 15.2"><rect x="1" y="0.3" width="11.6" height="14.6" rx="0.8" fill="#dbe7f4"/><rect x="1" y="0.3" width="11.9" height="1.2" fill="#c0daf4"/><rect x="1.8" y="1.3" width="10.3" height="11.8" fill="#ddeeff"/><rect x="12" y="1" width="0.9" height="13" fill="#b4d2f0"/><rect x="1.8" y="13" width="11.1" height="1" fill="#9ec5ee"/><rect x="0" y="0.8" width="1.8" height="13.9" fill="#7db4ea"/></svg>
<a class="l" style="left:66px;top:703px;letter-spacing:-0.383px">Ремонты и обслуживание</a>
<a class="h" style="left:344px;top:630px;letter-spacing:-0.215px">Создать документ</a>
<svg style="left:352px;top:655px" width="10" height="14" viewBox="0 0 10 14"><path d="M0 0 H7.2 L10 2.8 V14 H0 Z" fill="#90caf9"/><path d="M7.2 0 L10 2.8 H7.2 Z" fill="#e3f2fd"/><rect x="2" y="5.9" width="6" height="1.4" fill="#3f8fe0"/><rect x="2" y="7.9" width="6" height="1.4" fill="#4f9ae6"/><rect x="2" y="9.9" width="4.6" height="1.4" fill="#3f8fe0"/></svg>
<a class="l" style="left:376px;top:656px;letter-spacing:-0.353px">Начать обслуживание</a>
<svg style="left:352px;top:683px" width="10" height="14" viewBox="0 0 10 14"><path d="M0 0 H7.2 L10 2.8 V14 H0 Z" fill="#90caf9"/><path d="M7.2 0 L10 2.8 H7.2 Z" fill="#e3f2fd"/><rect x="2" y="5.9" width="6" height="1.4" fill="#3f8fe0"/><rect x="2" y="7.9" width="6" height="1.4" fill="#4f9ae6"/><rect x="2" y="9.9" width="4.6" height="1.4" fill="#3f8fe0"/></svg>
<a class="l" style="left:376px;top:684px;letter-spacing:-0.348px">Закончить обслуживание</a>
<svg style="left:352px;top:711px" width="10" height="14" viewBox="0 0 10 14"><path d="M0 0 H7.2 L10 2.8 V14 H0 Z" fill="#90caf9"/><path d="M7.2 0 L10 2.8 H7.2 Z" fill="#e3f2fd"/><rect x="2" y="5.9" width="6" height="1.4" fill="#3f8fe0"/><rect x="2" y="7.9" width="6" height="1.4" fill="#4f9ae6"/><rect x="2" y="9.9" width="4.6" height="1.4" fill="#3f8fe0"/></svg>
<a class="l" style="left:376px;top:712px;letter-spacing:-0.363px">Изменить показатели оборудования</a>
<a class="h" style="left:654px;top:630px;letter-spacing:-0.221px">Журналы</a>
<svg style="left:660px;top:655px" width="14" height="15" viewBox="0 0 14 15"><path d="M0.4 2 L10 0.9 V13.3 L1.2 14.6 Q0.4 14.6 0.4 13.8 Z" fill="#dbeafe" stroke="#a5c9f0" stroke-width="0.7"/><path d="M10 -0.3 L10.6 1 L13.7 3 V13.8 L10 13.3 Z" fill="#9ec5ee"/><path d="M1.2 14.7 L10 13.3 L13.7 13.8 L5 15.1 Z" fill="#7fb0e4"/><rect x="0.4" y="2.2" width="1.9" height="11.8" fill="#bdd9fa"/><circle cx="6" cy="4.9" r="0.9" fill="#8fc1f5"/><path d="M3.8 8.9 Q6 5.8 8.6 8.4 Z" fill="#8fc1f5"/><rect x="4" y="10.4" width="4" height="0.7" fill="#bcd7f5"/></svg>
<a class="l" style="left:686px;top:656px;letter-spacing:-0.387px">Начало обслуживаний</a>
<svg style="left:660px;top:683px" width="14" height="15" viewBox="0 0 14 15"><path d="M0.4 2 L10 0.9 V13.3 L1.2 14.6 Q0.4 14.6 0.4 13.8 Z" fill="#dbeafe" stroke="#a5c9f0" stroke-width="0.7"/><path d="M10 -0.3 L10.6 1 L13.7 3 V13.8 L10 13.3 Z" fill="#9ec5ee"/><path d="M1.2 14.7 L10 13.3 L13.7 13.8 L5 15.1 Z" fill="#7fb0e4"/><rect x="0.4" y="2.2" width="1.9" height="11.8" fill="#bdd9fa"/><circle cx="6" cy="4.9" r="0.9" fill="#8fc1f5"/><path d="M3.8 8.9 Q6 5.8 8.6 8.4 Z" fill="#8fc1f5"/><rect x="4" y="10.4" width="4" height="0.7" fill="#bcd7f5"/></svg>
<a class="l" style="left:686px;top:684px;letter-spacing:-0.345px">Окончания обслуживаний</a>
<svg style="left:660px;top:711px" width="14" height="15" viewBox="0 0 14 15"><path d="M0.4 2 L10 0.9 V13.3 L1.2 14.6 Q0.4 14.6 0.4 13.8 Z" fill="#dbeafe" stroke="#a5c9f0" stroke-width="0.7"/><path d="M10 -0.3 L10.6 1 L13.7 3 V13.8 L10 13.3 Z" fill="#9ec5ee"/><path d="M1.2 14.7 L10 13.3 L13.7 13.8 L5 15.1 Z" fill="#7fb0e4"/><rect x="0.4" y="2.2" width="1.9" height="11.8" fill="#bdd9fa"/><circle cx="6" cy="4.9" r="0.9" fill="#8fc1f5"/><path d="M3.8 8.9 Q6 5.8 8.6 8.4 Z" fill="#8fc1f5"/><rect x="4" y="10.4" width="4" height="0.7" fill="#bcd7f5"/></svg>
<a class="l" style="left:686px;top:712px;letter-spacing:-0.356px">Изменения показателей оборудования</a>
<div class="pn y" style="left:29px;top:757px;width:300px;height:144px"></div>
<div class="pn y" style="left:339px;top:757px;width:300px;height:142px"></div>
<div class="pn y" style="left:649px;top:757px;width:300px;height:148px"></div>
<svg style="left:33px;top:762px" width="60" height="58" viewBox="0 0 60 58"><defs><radialGradient id="us1" cx="0.55" cy="0.45" r="0.6"><stop offset="0" stop-color="#fff0a0"/><stop offset="0.45" stop-color="#ffd81e"/><stop offset="1" stop-color="#f0a800"/></radialGradient><linearGradient id="us2" x1="0" y1="0" x2="0" y2="1"><stop offset="0" stop-color="#000"/><stop offset="0.55" stop-color="#1a1a2e"/><stop offset="1" stop-color="#8a8ac0"/></linearGradient><linearGradient id="us3" x1="0" y1="0" x2="1" y2="1"><stop offset="0" stop-color="#0a70e8"/><stop offset="1" stop-color="#0a58c8"/></linearGradient><linearGradient id="us4" x1="0" y1="1" x2="1" y2="0"><stop offset="0" stop-color="#e8f4ff"/><stop offset="0.25" stop-color="#2a8ae8"/><stop offset="1" stop-color="#0a58c0"/></linearGradient><radialGradient id="us5" cx="0.5" cy="0.3" r="0.75"><stop offset="0" stop-color="#4ac84a"/><stop offset="0.6" stop-color="#0a9a1a"/><stop offset="1" stop-color="#067010"/></radialGradient></defs><ellipse cx="31" cy="47.6" rx="22" ry="3.4" fill="#000" opacity="0.22"/><ellipse cx="44" cy="44.6" rx="8.6" ry="3.4" fill="#000" opacity="0.3"/><path d="M52 13.6 L53.4 15.4 L53.4 35.6 L52 34.6 Z" fill="#2a2a5a" opacity="0.55"/><ellipse cx="42.8" cy="42.2" rx="7.6" ry="3.6" fill="#e0e0fa" stroke="#3a3a80" stroke-width="0.8"/><path d="M40.6 34 L45.6 34.8 L45.6 40.5 L40.6 40.5 Z" fill="#c8c8f0" stroke="#3a3a80" stroke-width="0.6"/><path d="M26.4 10 L29.6 8.6 L51.6 12.8 L51.6 34.4 L30 31.2 L26.4 31.6 Z" fill="#ececff" stroke="#4a4a90" stroke-width="0.8" stroke-linejoin="round"/><path d="M26.4 10 L29.6 8.6 L29.6 31.2 L26.4 31.6 Z" fill="#c4c4ee"/><path d="M33 13.4 L48.2 15.8 L48.2 31 L33 28.6 Z" fill="url(#us3)"/><path d="M6.6 42.6 C6.6 37.4 12 33.6 20.6 33.6 C29.4 33.6 35 37.2 35 42.4 C35 46.6 29 49 20.6 49 C12.4 49 6.6 46.8 6.6 42.6 Z" fill="url(#us4)" stroke="#141450" stroke-width="1.3"/><path d="M17.6 37.4 L21 41 L24.4 37.4 Z" fill="#f4f4ff"/><path d="M12.6 36 L17.4 38.6 L20.6 41.4 L16.4 41 Z" fill="#0a48a8" opacity="0.6"/><circle cx="21.2" cy="25.6" r="11" fill="url(#us1)" stroke="#8a6a10" stroke-width="0.5"/><path d="M10.3 24.2 C10.4 17 15 13 21.2 13 C27 13 31 16.4 32 21.8 C30 18.8 27.4 20.4 22 22.6 C17.6 24.2 13.6 24.8 10.3 24.2 Z" fill="url(#us2)"/><circle cx="33.9" cy="35" r="9.4" fill="url(#us5)" stroke="#056a0e" stroke-width="0.7"/><path d="M26 39 A9 9 0 0 0 41.6 39.4 A12 8 0 0 1 26 39 Z" fill="#c8f0c8" opacity="0.7"/><path d="M26.4 35 L31.2 30.4 L31.2 34 L36.6 34 L36.6 30.4 L41.4 35 L36.6 39.6 L36.6 36 L31.2 36 L31.2 39.6 Z" fill="#fff"/><rect x="6" y="52.2" width="48" height="0.7" fill="#f1f1e8"/></svg>
<div class="ttl" style="left:98px;top:778px;transform:scaleX(0.985);transform-origin:0 0">Сотрудники</div>
<svg style="left:41px;top:825px" width="13" height="15.2" viewBox="0 0 13 15.2"><rect x="1" y="0.3" width="11.6" height="14.6" rx="0.8" fill="#dbe7f4"/><rect x="1" y="0.3" width="11.9" height="1.2" fill="#c0daf4"/><rect x="1.8" y="1.3" width="10.3" height="11.8" fill="#ddeeff"/><rect x="12" y="1" width="0.9" height="13" fill="#b4d2f0"/><rect x="1.8" y="13" width="11.1" height="1" fill="#9ec5ee"/><rect x="0" y="0.8" width="1.8" height="13.9" fill="#7db4ea"/></svg>
<a class="l" style="left:66px;top:827px;letter-spacing:-0.354px">Ответственные сотрудники</a>
<svg style="left:40px;top:854px" width="13" height="14" viewBox="0 0 13 14"><rect x="0" y="0" width="13" height="14" rx="1.2" fill="#8096a6"/><rect x="1" y="1" width="3" height="3" fill="#8bc34a"/><rect x="5" y="1" width="3" height="3" fill="#8bc34a"/><rect x="9" y="1" width="3" height="3" fill="#8bc34a"/><rect x="1" y="5" width="3" height="2" fill="#f5f9ff"/><rect x="5" y="5" width="3" height="2" fill="#f5f9ff"/><rect x="9" y="5" width="3" height="2" fill="#f5f9ff"/><rect x="1" y="8" width="3" height="2" fill="#f5f9ff"/><rect x="5" y="8" width="3" height="2" fill="#8bc34a"/><rect x="9" y="8" width="3" height="2" fill="#f5f9ff"/><rect x="1" y="11" width="3" height="2" fill="#f5f9ff"/><rect x="5" y="11" width="3" height="2" fill="#f5f9ff"/><rect x="9" y="11" width="3" height="2" fill="#f5f9ff"/></svg>
<a class="l" style="left:66px;top:855px;letter-spacing:-0.353px">Логины и пароли</a>
<a class="h" style="left:344px;top:763px;letter-spacing:-0.215px">Создать документ</a>
<svg style="left:352px;top:788px" width="10" height="14" viewBox="0 0 10 14"><path d="M0 0 H7.2 L10 2.8 V14 H0 Z" fill="#90caf9"/><path d="M7.2 0 L10 2.8 H7.2 Z" fill="#e3f2fd"/><rect x="2" y="5.9" width="6" height="1.4" fill="#3f8fe0"/><rect x="2" y="7.9" width="6" height="1.4" fill="#4f9ae6"/><rect x="2" y="9.9" width="4.6" height="1.4" fill="#3f8fe0"/></svg>
<a class="l" style="left:376px;top:789px;letter-spacing:-0.299px">Закрепить сотрудников</a>
<svg style="left:352px;top:816px" width="10" height="14" viewBox="0 0 10 14"><path d="M0 0 H7.2 L10 2.8 V14 H0 Z" fill="#90caf9"/><path d="M7.2 0 L10 2.8 H7.2 Z" fill="#e3f2fd"/><rect x="2" y="5.9" width="6" height="1.4" fill="#3f8fe0"/><rect x="2" y="7.9" width="6" height="1.4" fill="#4f9ae6"/><rect x="2" y="9.9" width="4.6" height="1.4" fill="#3f8fe0"/></svg>
<a class="l" style="left:376px;top:817px;letter-spacing:-0.442px">Снять закрепление</a>
<svg style="left:352px;top:844px" width="10" height="14" viewBox="0 0 10 14"><path d="M0 0 H7.2 L10 2.8 V14 H0 Z" fill="#90caf9"/><path d="M7.2 0 L10 2.8 H7.2 Z" fill="#e3f2fd"/><rect x="2" y="5.9" width="6" height="1.4" fill="#3f8fe0"/><rect x="2" y="7.9" width="6" height="1.4" fill="#4f9ae6"/><rect x="2" y="9.9" width="4.6" height="1.4" fill="#3f8fe0"/></svg>
<a class="l" style="left:376px;top:845px;letter-spacing:-0.358px">Переместить сотрудников</a>
<svg style="left:352px;top:872px" width="10" height="14" viewBox="0 0 10 14"><path d="M0 0 H7.2 L10 2.8 V14 H0 Z" fill="#90caf9"/><path d="M7.2 0 L10 2.8 H7.2 Z" fill="#e3f2fd"/><rect x="2" y="5.9" width="6" height="1.4" fill="#3f8fe0"/><rect x="2" y="7.9" width="6" height="1.4" fill="#4f9ae6"/><rect x="2" y="9.9" width="4.6" height="1.4" fill="#3f8fe0"/></svg>
<a class="l" style="left:376px;top:873px;letter-spacing:-0.286px">Создать права доступа</a>
<a class="h" style="left:654px;top:763px;letter-spacing:-0.221px">Журналы</a>
<svg style="left:660px;top:788px" width="14" height="15" viewBox="0 0 14 15"><path d="M0.4 2 L10 0.9 V13.3 L1.2 14.6 Q0.4 14.6 0.4 13.8 Z" fill="#dbeafe" stroke="#a5c9f0" stroke-width="0.7"/><path d="M10 -0.3 L10.6 1 L13.7 3 V13.8 L10 13.3 Z" fill="#9ec5ee"/><path d="M1.2 14.7 L10 13.3 L13.7 13.8 L5 15.1 Z" fill="#7fb0e4"/><rect x="0.4" y="2.2" width="1.9" height="11.8" fill="#bdd9fa"/><circle cx="6" cy="4.9" r="0.9" fill="#8fc1f5"/><path d="M3.8 8.9 Q6 5.8 8.6 8.4 Z" fill="#8fc1f5"/><rect x="4" y="10.4" width="4" height="0.7" fill="#bcd7f5"/></svg>
<a class="l" style="left:686px;top:789px;letter-spacing:-0.309px">Закрепления сотрудников</a>
<svg style="left:660px;top:818px" width="14" height="15" viewBox="0 0 14 15"><path d="M0.4 2 L10 0.9 V13.3 L1.2 14.6 Q0.4 14.6 0.4 13.8 Z" fill="#dbeafe" stroke="#a5c9f0" stroke-width="0.7"/><path d="M10 -0.3 L10.6 1 L13.7 3 V13.8 L10 13.3 Z" fill="#9ec5ee"/><path d="M1.2 14.7 L10 13.3 L13.7 13.8 L5 15.1 Z" fill="#7fb0e4"/><rect x="0.4" y="2.2" width="1.9" height="11.8" fill="#bdd9fa"/><circle cx="6" cy="4.9" r="0.9" fill="#8fc1f5"/><path d="M3.8 8.9 Q6 5.8 8.6 8.4 Z" fill="#8fc1f5"/><rect x="4" y="10.4" width="4" height="0.7" fill="#bcd7f5"/></svg>
<a class="l" style="left:686px;top:819px;letter-spacing:-0.464px">Снятия закреплений</a>
<svg style="left:660px;top:848px" width="14" height="15" viewBox="0 0 14 15"><path d="M0.4 2 L10 0.9 V13.3 L1.2 14.6 Q0.4 14.6 0.4 13.8 Z" fill="#dbeafe" stroke="#a5c9f0" stroke-width="0.7"/><path d="M10 -0.3 L10.6 1 L13.7 3 V13.8 L10 13.3 Z" fill="#9ec5ee"/><path d="M1.2 14.7 L10 13.3 L13.7 13.8 L5 15.1 Z" fill="#7fb0e4"/><rect x="0.4" y="2.2" width="1.9" height="11.8" fill="#bdd9fa"/><circle cx="6" cy="4.9" r="0.9" fill="#8fc1f5"/><path d="M3.8 8.9 Q6 5.8 8.6 8.4 Z" fill="#8fc1f5"/><rect x="4" y="10.4" width="4" height="0.7" fill="#bcd7f5"/></svg>
<a class="l" style="left:686px;top:849px;letter-spacing:-0.279px">Перемещения сотрудников</a>
<svg style="left:660px;top:878px" width="14" height="15" viewBox="0 0 14 15"><path d="M0.4 2 L10 0.9 V13.3 L1.2 14.6 Q0.4 14.6 0.4 13.8 Z" fill="#dbeafe" stroke="#a5c9f0" stroke-width="0.7"/><path d="M10 -0.3 L10.6 1 L13.7 3 V13.8 L10 13.3 Z" fill="#9ec5ee"/><path d="M1.2 14.7 L10 13.3 L13.7 13.8 L5 15.1 Z" fill="#7fb0e4"/><rect x="0.4" y="2.2" width="1.9" height="11.8" fill="#bdd9fa"/><circle cx="6" cy="4.9" r="0.9" fill="#8fc1f5"/><path d="M3.8 8.9 Q6 5.8 8.6 8.4 Z" fill="#8fc1f5"/><rect x="4" y="10.4" width="4" height="0.7" fill="#bcd7f5"/></svg>
<a class="l" style="left:686px;top:879px;letter-spacing:-0.334px">Права доступа</a>
<div class="btn bb" style="left:1034px;top:954px;width:30px;height:26px"></div>
<svg style="left:1042px;top:960px" width="14" height="14" viewBox="0 0 14 14"><path d="M10.2 2.9 A5.2 5.2 0 1 0 12.1 8.1" fill="none" stroke="#2ba52b" stroke-width="1.9" stroke-linecap="round"/><path d="M7.6 0.9 H12.1 V5.5 H8.6 L10.6 3.7 L7.6 3.7 Z" fill="#2ba52b"/></svg>
<div class="btn bb" style="left:1073px;top:954px;width:30px;height:26px"></div>
<svg style="left:1079.8px;top:959px" width="16" height="16" viewBox="0 0 16 16"><path d="M14.94 7.12 L14.94 8.88 L13.06 9.21 L12.43 10.72 L13.53 12.29 L12.29 13.53 L10.72 12.43 L9.21 13.06 L8.88 14.94 L7.12 14.94 L6.79 13.06 L5.28 12.43 L3.71 13.53 L2.47 12.29 L3.57 10.72 L2.94 9.21 L1.06 8.88 L1.06 7.12 L2.94 6.79 L3.57 5.28 L2.47 3.71 L3.71 2.47 L5.28 3.57 L6.79 2.94 L7.12 1.06 L8.88 1.06 L9.21 2.94 L10.72 3.57 L12.29 2.47 L13.53 3.71 L12.43 5.28 L13.06 6.79 Z" fill="#fdfdfd" stroke="#5f6b7a" stroke-width="1.15" stroke-linejoin="round"/><circle cx="8" cy="8" r="1.9" fill="none" stroke="#5f6b7a" stroke-width="1.3"/></svg>
<div class="btn bb" style="left:1112px;top:954px;width:61px;height:26px"></div>
<div class="t" style="left:1126px;top:960px;color:#333;font-size:13.5px;letter-spacing:-0.090px">Еще</div>
<div class="abs" style="left:1159.5px;top:967px;width:0;height:0;border-left:3.5px solid transparent;border-right:3.5px solid transparent;border-top:3.5px solid #444"></div>
</body></html>
